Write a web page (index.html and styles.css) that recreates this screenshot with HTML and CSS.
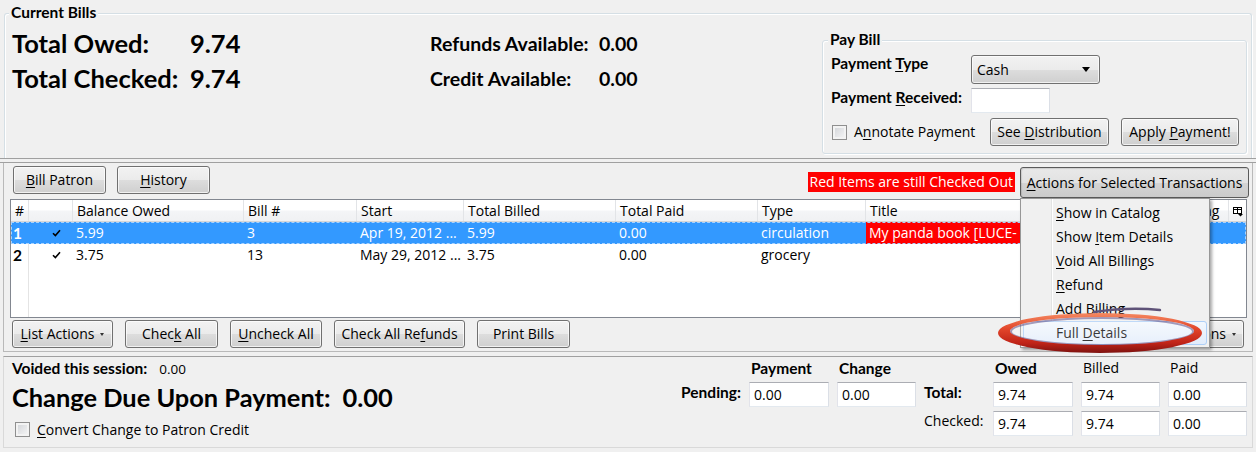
FILE: index.html
```html
<!DOCTYPE html>
<html lang="en">
<head>
<meta charset="utf-8">
<title>Current Bills</title>
<link rel="stylesheet" href="styles.css">
</head>
<body>
<div class="app">
  <section class="top-pane">
    <div class="group current">
      <div class="group-title">Current Bills</div>
      <div class="current-body">
        <div class="totals">
          <div>Total Owed:</div><div>9.74</div>
          <div>Total Checked:</div><div>9.74</div>
        </div>
        <div class="avail">
          <div>Refunds Available:</div><div>0.00</div>
          <div>Credit Available:</div><div>0.00</div>
        </div>
        <div class="group paybill">
          <div class="group-title">Pay Bill</div>
          <div class="pay-grid">
            <div class="pay-lbl">Payment <u>T</u>ype</div>
            <div class="select"><span>Cash</span><span class="caret"></span></div>
            <div class="pay-lbl">Payment <u>R</u>eceived:</div>
            <div class="field pay-input"></div>
          </div>
          <div class="pay-actions">
            <div class="check annotate"><span class="box"></span><span>A<u>n</u>notate Payment</span></div>
            <button class="btn w-dist"><span>See <u>D</u>istribution</span></button>
            <button class="btn w-apply"><span>Apply <u>P</u>ayment!</span></button>
          </div>
        </div>
      </div>
    </div>
  </section>

  <div class="splitter"></div>

  <section class="mid-pane">
    <div class="top-tools">
      <button class="btn w93"><span><u>B</u>ill Patron</span></button>
      <button class="btn w93 ml11"><span><u>H</u>istory</span></button>
      <div class="red-note">Red Items are still Checked Out</div>
      <button class="btn btn-open w-actions"><span><u>A</u>ctions for Selected Transactions</span></button>
    </div>

    <div class="list">
      <div class="cols thead">
        <div class="th">#</div>
        <div class="th"></div>
        <div class="th">Balance Owed</div>
        <div class="th">Bill #</div>
        <div class="th">Start</div>
        <div class="th">Total Billed</div>
        <div class="th">Total Paid</div>
        <div class="th">Type</div>
        <div class="th">Title</div>
        <div class="th">Billing</div>
        <div class="th picker">
          <svg width="11" height="10" viewBox="0 0 11 10">
            <rect x="0.5" y="0.5" width="8" height="6" fill="#fff" stroke="#000"/>
            <line x1="0.5" y1="2.5" x2="8.5" y2="2.5" stroke="#000"/>
            <line x1="4.5" y1="0.5" x2="4.5" y2="6.5" stroke="#000"/>
            <polygon points="5,7 10,7 7.5,9.5" fill="#000"/>
          </svg>
        </div>
      </div>
      <div class="tbody">
        <div class="cols tr selected">
          <div class="td num">1</div>
          <div class="td chk"><svg width="9" height="8" viewBox="0 0 9 8"><polyline points="1,4.2 3.4,6.6 8,1.2" fill="none" stroke="#000" stroke-width="1.6"/></svg></div>
          <div class="td">5.99</div>
          <div class="td">3</div>
          <div class="td">Apr 19, 2012 ...</div>
          <div class="td">5.99</div>
          <div class="td">0.00</div>
          <div class="td">circulation</div>
          <div class="td due">My panda book [LUCE-</div>
          <div class="td"></div>
          <div class="td"></div>
        </div>
        <div class="cols tr">
          <div class="td num">2</div>
          <div class="td chk"><svg width="9" height="8" viewBox="0 0 9 8"><polyline points="1,4.2 3.4,6.6 8,1.2" fill="none" stroke="#000" stroke-width="1.6"/></svg></div>
          <div class="td">3.75</div>
          <div class="td">13</div>
          <div class="td">May 29, 2012 ...</div>
          <div class="td">3.75</div>
          <div class="td">0.00</div>
          <div class="td">grocery</div>
          <div class="td"></div>
          <div class="td"></div>
          <div class="td"></div>
        </div>
      </div>
    </div>

    <div class="bottom-tools">
      <button class="btn w-list"><span><u>L</u>ist Actions</span><span class="mini-caret"></span></button>
      <button class="btn w93"><span>Chec<u>k</u> All</span></button>
      <button class="btn w92"><span><u>U</u>ncheck All</span></button>
      <button class="btn w131"><span>Check All Re<u>f</u>unds</span></button>
      <button class="btn w93"><span>Print Bills</span></button>
      <button class="btn w-other"><span>Other Actions</span><span class="mini-caret"></span></button>
    </div>
  </section>

  <section class="bottom-pane">
    <div class="change-col">
      <div class="voided"><span class="voided-lbl">Voided this session:</span><span class="voided-val">0.00</span></div>
      <div class="change-due"><span>Change Due Upon Payment:</span><span class="change-val">0.00</span></div>
      <div class="check convert"><span class="box"></span><span><u>C</u>onvert Change to Patron Credit</span></div>
    </div>
    <div class="sum-grid">
      <div></div>
      <div class="hd strong">Payment</div>
      <div class="hd strong">Change</div>
      <div></div>
      <div class="hd strong">Owed</div>
      <div class="hd">Billed</div>
      <div class="hd">Paid</div>

      <div class="row-lbl strong right">Pending:</div>
      <div class="field">0.00</div>
      <div class="field">0.00</div>
      <div class="row-lbl strong">Total:</div>
      <div class="field">9.74</div>
      <div class="field">9.74</div>
      <div class="field">0.00</div>

      <div></div>
      <div></div>
      <div></div>
      <div class="row-lbl">Checked:</div>
      <div class="field">9.74</div>
      <div class="field">9.74</div>
      <div class="field">0.00</div>
    </div>
  </section>

  <div class="menu">
    <div class="menu-item"><u>S</u>how in Catalog</div>
    <div class="menu-item">Show <u>I</u>tem Details</div>
    <div class="menu-item"><u>V</u>oid All Billings</div>
    <div class="menu-item"><u>R</u>efund</div>
    <div class="menu-item">Add <u>B</u>illing</div>
    <div class="menu-item hot">Full <u>D</u>etails</div>
  </div>

  <svg class="annot" width="230" height="60" viewBox="0 0 230 60">
    <defs>
      <linearGradient id="rim" x1="0" y1="0" x2="0" y2="1">
        <stop offset="0" stop-color="#f58a62"/>
        <stop offset="0.4" stop-color="#e2452a"/>
        <stop offset="0.75" stop-color="#c02418"/>
        <stop offset="1" stop-color="#7e1210"/>
      </linearGradient>
    </defs>
    <ellipse cx="112" cy="31" rx="92" ry="14" fill="#ffffff" fill-opacity="0.22"/>
    <ellipse cx="112" cy="31.5" rx="91" ry="13.5" fill="none" stroke="#5d4f86" stroke-opacity="0.55" stroke-width="2"/>
    <path fill="url(#rim)" fill-rule="evenodd" d="M8 33 a102 20 0 1 0 204 0 a102 20 0 1 0 -204 0 Z M20 31 a92 14 0 1 0 184 0 a92 14 0 1 0 -184 0 Z"/>
    <path d="M104 12 C 130 8, 152 8, 170 10" fill="none" stroke="#5e5278" stroke-width="2.4" stroke-linecap="round"/>
  </svg>
</div>
</body>
</html>
```

FILE: styles.css
```css
* { box-sizing: border-box; }

html, body {
  margin: 0;
  padding: 0;
}

body {
  width: 1256px;
  height: 452px;
  overflow: hidden;
  background: #f0f0f0;
  color: #000;
  font-family: "Open Sans", "Noto Sans", sans-serif;
  font-size: 14px;
}

.app {
  position: relative;
  width: 1256px;
  height: 452px;
}

u {
  text-decoration: underline;
  text-decoration-thickness: 1px;
  text-underline-offset: 2px;
}

/* ---------- generic widgets ---------- */
.btn {
  display: inline-flex;
  align-items: center;
  justify-content: center;
  height: 28px;
  padding: 0;
  margin: 0;
  border: 1px solid #707070;
  border-radius: 3px;
  background: linear-gradient(to bottom, #f2f2f2 0%, #ebebeb 50%, #dddddd 51%, #cfcfcf 100%);
  box-shadow: inset 0 0 0 1px rgba(255, 255, 255, 0.7);
  font-family: "Open Sans", "Noto Sans", sans-serif;
  font-size: 14px;
  line-height: 16px;
  color: #000;
  white-space: nowrap;
}

.btn-open {
  background: linear-gradient(to bottom, #e9e9e9 0%, #e2e2e2 50%, #d4d4d4 51%, #cbcbcb 100%);
  border-color: #5a5a5a;
  box-shadow: inset 1px 1px 1px rgba(0, 0, 0, 0.12);
}

.w93 { width: 93px; }
.w92 { width: 92px; }
.w131 { width: 131px; }
.ml11 { margin-left: 11px; }

.field {
  height: 25px;
  border: 1px solid;
  border-color: #abadb3 #dbdfe6 #e3e9ef #e2e3ea;
  background: #fff;
  padding-left: 4px;
  line-height: 23px;
  font-size: 14px;
  white-space: nowrap;
}

.check {
  display: flex;
  align-items: center;
  gap: 7px;
  line-height: 16px;
  white-space: nowrap;
}

.box {
  width: 15px;
  height: 15px;
  flex: none;
  border: 1px solid #8f8f8f;
  background: linear-gradient(135deg, #cfd2d6 0%, #e6e7e9 55%, #f7f7f7 100%);
  box-shadow: inset 0 0 0 2px #f3f3f3;
}

.group {
  border: 1px solid #d5dfe5;
  border-radius: 3px;
  box-shadow: inset 1px 1px 0 #ffffff, 1px 1px 0 #ffffff;
}

.group-title {
  display: block;
  width: fit-content;
  margin: -11px 0 0 4px;
  padding: 0 2px;
  background: #f0f0f0;
  font-family: "Lato", sans-serif;
  font-weight: 700;
  font-size: 15.5px;
  line-height: 18px;
}

/* ---------- top pane ---------- */
.top-pane {
  height: 158px;
  padding: 13px 4px 0;
}

.current {
  height: 145px;
  border-bottom: none;
  border-radius: 3px 3px 0 0;
}

.current-body {
  display: flex;
  margin-top: 5px;
  padding-left: 7px;
}

.totals {
  width: 418px;
  display: grid;
  grid-template-columns: 178px auto;
  align-content: start;
  font-family: "Lato", sans-serif;
  font-weight: 700;
  font-size: 25.5px;
  line-height: 35px;
  white-space: nowrap;
}

.avail {
  width: 392px;
  display: grid;
  grid-template-columns: 169px auto;
  align-content: start;
  font-family: "Lato", sans-serif;
  font-weight: 700;
  font-size: 19.5px;
  line-height: 35px;
  white-space: nowrap;
}

.paybill {
  width: 425px;
  height: 114px;
  margin-top: 14px;
}

.paybill .group-title {
  margin-left: 5px;
}

.pay-grid {
  display: grid;
  grid-template-columns: 140px 129px;
  grid-template-rows: 29px 25px;
  row-gap: 4px;
  margin: 7px 0 0 8px;
  align-items: start;
}

.pay-lbl {
  font-family: "Lato", sans-serif;
  font-weight: 700;
  font-size: 15.5px;
  line-height: 16px;
  white-space: nowrap;
}

.pay-grid .pay-lbl:nth-of-type(3) {
  padding-top: 1px;
}

.select {
  display: flex;
  align-items: center;
  justify-content: space-between;
  height: 29px;
  padding: 0 9px 0 5px;
  border: 1px solid #707070;
  border-radius: 3px;
  background: linear-gradient(to bottom, #f2f2f2 0%, #ebebeb 50%, #dddddd 51%, #cfcfcf 100%);
  box-shadow: inset 0 0 0 1px rgba(255, 255, 255, 0.7);
  line-height: 16px;
}

.caret {
  width: 0;
  height: 0;
  border-left: 4.5px solid transparent;
  border-right: 4.5px solid transparent;
  border-top: 5px solid #000;
}

.pay-input {
  width: 79px;
}

.pay-actions {
  display: flex;
  align-items: center;
  height: 28px;
  margin: 5px 0 0 9px;
}

.annotate {
  width: 158px;
}

.w-dist { width: 119px; }
.w-apply { width: 118px; margin-left: 12px; }

/* ---------- splitter ---------- */
.splitter {
  height: 5px;
  border-top: 1px solid #a0a0a0;
  border-bottom: 1px solid #a0a0a0;
}

/* ---------- middle pane ---------- */
.mid-pane {
  height: 189px;
  margin: 0 3px;
  border-left: 1px solid #b9b9b9;
  border-right: 1px solid #b9b9b9;
  border-bottom: 1px solid #b9b9b9;
}

.top-tools {
  display: flex;
  align-items: flex-start;
  height: 36px;
  padding: 3px 3px 0 9px;
}

.red-note {
  margin: 6px 0 0 auto;
  height: 20px;
  padding: 0 2px;
  background: #ff0000;
  color: #fff;
  line-height: 20px;
  white-space: nowrap;
}

.w-actions {
  width: 229px;
  height: 31px;
  margin: 1px 0 0 5px;
}

.list {
  height: 119px;
  margin: 0 5px 0 6px;
  border: 1px solid #828790;
  background: #fff;
  overflow: hidden;
}

.cols {
  display: grid;
  grid-template-columns: 18px 44px 171px 113px 107px 152px 142px 108px 310px 53px 17px;
}

.thead {
  height: 22px;
  border-bottom: 1px solid #d5d5d5;
  background: linear-gradient(to bottom, #ffffff 0%, #ffffff 45%, #f4f5f7 55%, #f0f1f3 100%);
}

.th {
  padding-left: 4px;
  border-right: 1px solid #e2e4e7;
  line-height: 21px;
  white-space: nowrap;
  overflow: hidden;
}

.th.picker {
  border-right: none;
  padding: 7px 0 0 4px;
}

.picker svg { display: block; }

.tbody {
  height: 95px;
  background: linear-gradient(to right, transparent 17px, #e4e4e4 17px, #e4e4e4 18px, transparent 18px);
}

.tr {
  height: 22px;
}

.td {
  padding-left: 3px;
  line-height: 22px;
  white-space: nowrap;
  overflow: hidden;
}

.td.num {
  padding-left: 2px;
  font-family: "Lato", sans-serif;
  font-weight: 700;
  font-size: 15.5px;
}

.td.chk {
  display: flex;
  align-items: center;
  padding-left: 23px;
}

.td.chk svg { display: block; }

.selected {
  background: #3399ff;
  color: #fff;
  outline: 1px dashed #a9d3ff;
  outline-offset: -1px;
}

.td.due {
  background: #ff0000;
  color: #fff;
}

.bottom-tools {
  display: flex;
  align-items: flex-start;
  gap: 12px;
  height: 33px;
  padding: 2px 8px 0 8px;
}

.w-list {
  width: 101px;
  gap: 6px;
}

.mini-caret {
  width: 0;
  height: 0;
  border-left: 2.5px solid transparent;
  border-right: 2.5px solid transparent;
  border-top: 3px solid #333;
}

.w-other {
  width: 100px;
  margin-left: auto;
  justify-content: flex-end;
  gap: 6px;
  padding-right: 7px;
}

/* ---------- bottom pane ---------- */
.bottom-pane {
  height: 92px;
  margin: 4px 3px 0;
  border: 1px solid #d9d9d9;
  border-top-color: #a0a0a0;
  display: flex;
  justify-content: space-between;
  padding: 2px 5px 0 8px;
}

.voided {
  display: flex;
  align-items: baseline;
  line-height: 18px;
  white-space: nowrap;
}

.voided-lbl {
  font-family: "Lato", sans-serif;
  font-weight: 700;
  font-size: 15.5px;
}

.voided-val {
  margin-left: 12px;
  font-size: 13.5px;
}

.change-due {
  display: flex;
  margin-top: 4px;
  font-family: "Lato", sans-serif;
  font-weight: 700;
  font-size: 25.4px;
  line-height: 30px;
  white-space: nowrap;
}

.change-val {
  margin-left: 12px;
}

.convert {
  height: 17px;
  margin: 9px 0 0 3px;
}

.sum-grid {
  display: grid;
  grid-template-columns: 70px 80px 79px 61px 80px 79px 79px;
  grid-template-rows: 19px 25px 25px;
  column-gap: 8px;
  row-gap: 4px;
  align-items: start;
}

.strong {
  font-family: "Lato", sans-serif;
  font-weight: 700;
  font-size: 15.5px;
}

.hd {
  padding-left: 2px;
  line-height: 18px;
  white-space: nowrap;
}

.row-lbl {
  padding-top: 2px;
  line-height: 16px;
  white-space: nowrap;
}

.row-lbl.right {
  text-align: right;
}

/* ---------- popup menu (overlay) ---------- */
.menu {
  position: absolute;
  left: 1020px;
  top: 198px;
  width: 190px;
  height: 150px;
  padding: 2px;
  border: 1px solid #979797;
  background: linear-gradient(to right, #f0f0f0 0, #f0f0f0 30px, #e2e3e3 30px, #e2e3e3 31px, #ffffff 31px, #ffffff 32px, #f0f0f0 32px);
  box-shadow: 2px 2px 3px rgba(0, 0, 0, 0.35);
}

.menu-item {
  height: 24px;
  padding-left: 32px;
  border: 1px solid transparent;
  border-radius: 3px;
  line-height: 22px;
  white-space: nowrap;
}

.menu-item.hot {
  border-color: #aecff7;
  background: linear-gradient(to bottom, #f2f7fd, #e1ecfb);
}

/* ---------- annotation overlay ---------- */
.annot {
  position: absolute;
  left: 990px;
  top: 300px;
  overflow: visible;
}
```
